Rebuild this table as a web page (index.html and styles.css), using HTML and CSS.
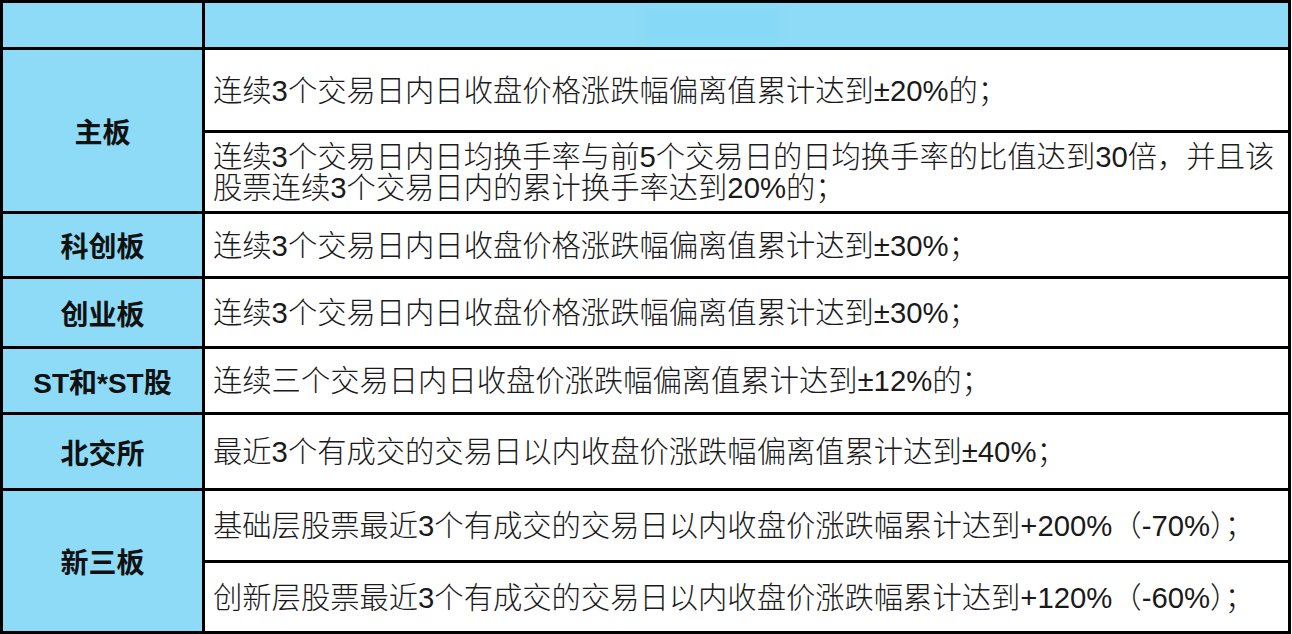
FILE: index.html
```html
<!DOCTYPE html>
<html lang="zh-CN">
<head>
<meta charset="utf-8">
<title>异常波动标准</title>
<link rel="stylesheet" href="styles.css">
</head>
<body>
<div class="sheet">
  <div class="cell label head-left"></div>
  <div class="cell head-right"><span class="smudge"></span></div>

  <div class="cell label r-main">主板</div>
  <div class="cell text">连续3个交易日内日收盘价格涨跌幅偏离值累计达到±20%的；</div>
  <div class="cell text">连续3个交易日内日均换手率与前5个交易日的日均换手率的比值达到30倍，并且该<br>股票连续3个交易日内的累计换手率达到20%的；</div>

  <div class="cell label">科创板</div>
  <div class="cell text">连续3个交易日内日收盘价格涨跌幅偏离值累计达到±30%；</div>

  <div class="cell label">创业板</div>
  <div class="cell text">连续3个交易日内日收盘价格涨跌幅偏离值累计达到±30%；</div>

  <div class="cell label">ST和*ST股</div>
  <div class="cell text">连续三个交易日内日收盘价涨跌幅偏离值累计达到±12%的；</div>

  <div class="cell label">北交所</div>
  <div class="cell text">最近3个有成交的交易日以内收盘价涨跌幅偏离值累计达到±40%；</div>

  <div class="cell label r-new">新三板</div>
  <div class="cell text">基础层股票最近3个有成交的交易日以内收盘价涨跌幅累计达到+200%（-70%）；</div>
  <div class="cell text">创新层股票最近3个有成交的交易日以内收盘价涨跌幅累计达到+120%（-60%）；</div>
</div>
</body>
</html>
```

FILE: styles.css
```css
html, body {
  margin: 0;
  padding: 0;
  background: #ffffff;
}

.sheet {
  display: grid;
  grid-template-columns: 199px 1083px;
  grid-template-rows: 44px 80px 78px 62px 67px 63px 73px 69px 68px;
  gap: 3px;
  padding: 3px;
  width: 1285px;
  background: #000000;
}

.cell {
  background: #ffffff;
  display: flex;
  align-items: center;
}

.label {
  background: #8ddbf6;
  justify-content: center;
  font-family: "Liberation Sans", "Noto Sans CJK SC", sans-serif;
  font-weight: 700;
  font-size: 28px;
  color: #111111;
}

.head-right {
  background: #8ddbf6;
}

.smudge {
  display: block;
  margin-left: 440px;
  width: 135px;
  height: 30px;
  background: #86d9f7;
  filter: blur(4px);
}

.r-main {
  grid-row: span 2;
}

.r-new {
  grid-row: span 2;
}

.text {
  padding-left: 8px;
  font-family: "Liberation Sans", "Noto Sans CJK SC", sans-serif;
  font-size: 29.3px;
  font-weight: 300;
  line-height: 31px;
  color: #1a1a1a;
}
```
